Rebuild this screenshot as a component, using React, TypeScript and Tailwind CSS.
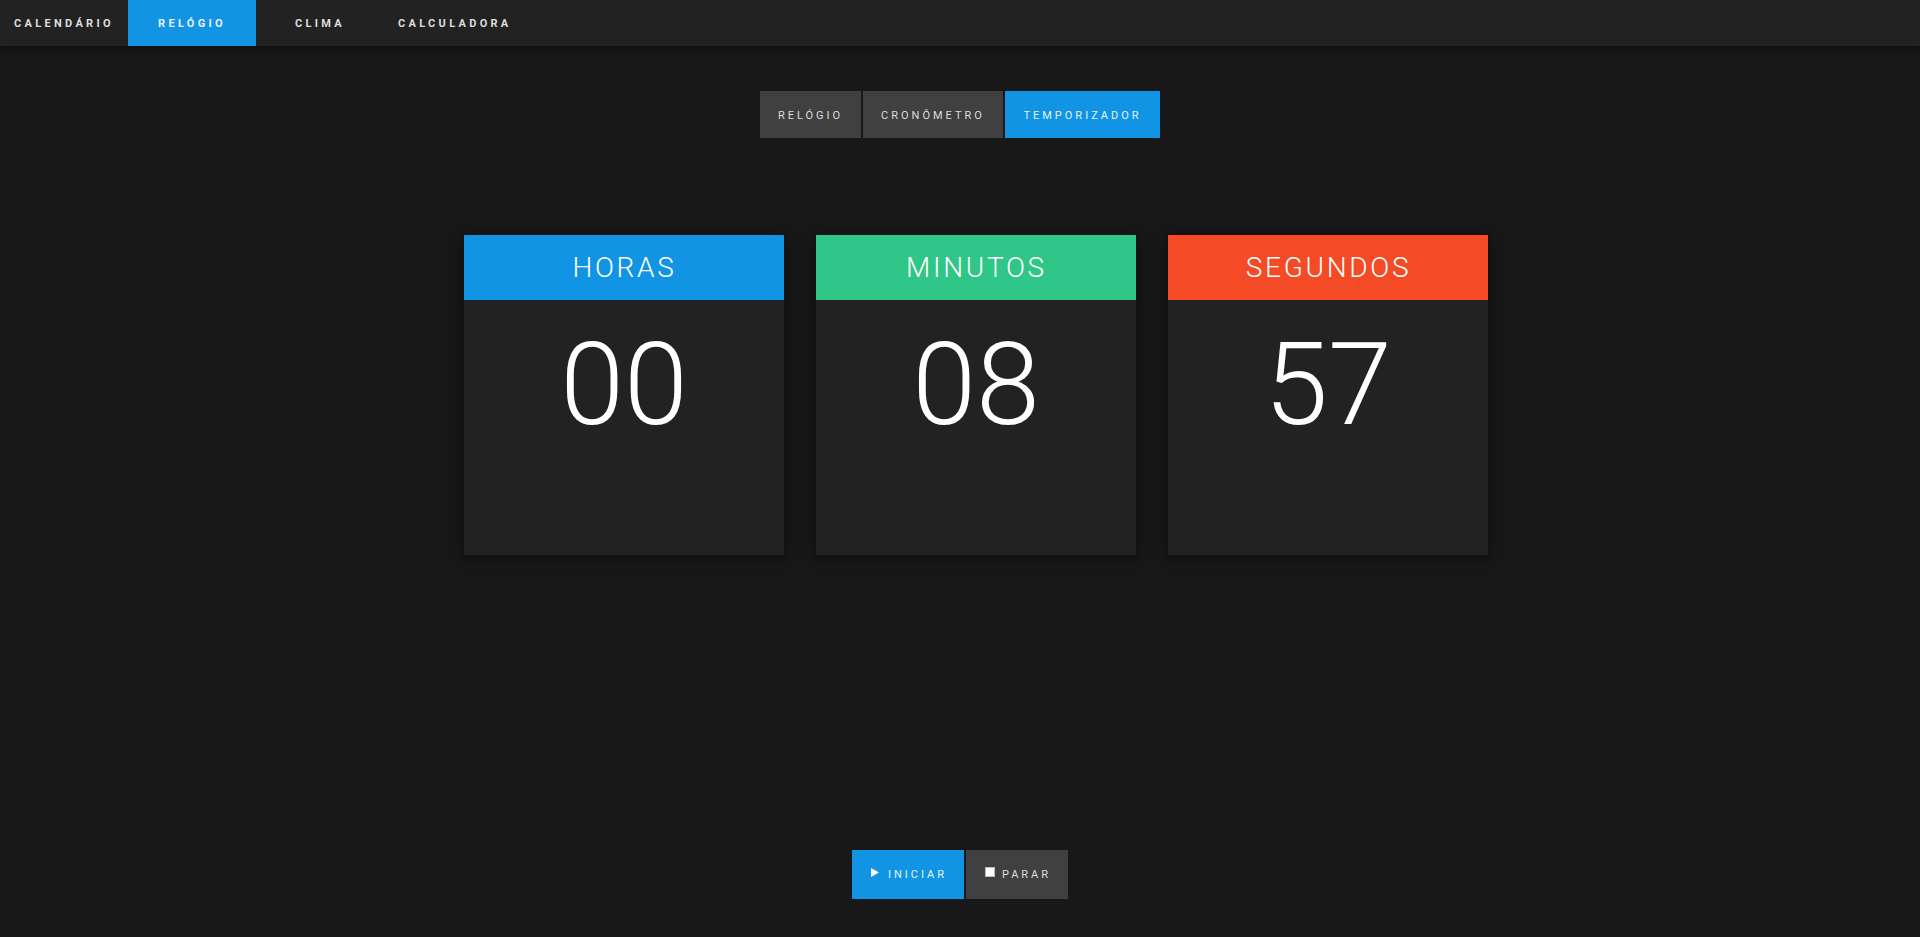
import React from "react";

const navItems = ["CALENDÁRIO", "RELÓGIO", "CLIMA", "CALCULADORA"];
const tabs = ["RELÓGIO", "CRONÔMETRO", "TEMPORIZADOR"];

function Card({ title, value, color }: { title: string; value: string; color: string }) {
  return (
    <div className="w-[320px] h-[320px] bg-[#222222] shadow-[0_2px_12px_rgba(0,0,0,0.55)] flex flex-col">
      <div className={`h-[65px] flex items-center justify-center ${color}`}>
        <span className="text-[28px] font-light tracking-[2.7px] text-white leading-none pl-[1px]">{title}</span>
      </div>
      <div className="flex justify-center pt-[27px]">
        <span className="text-[115px] font-light text-white leading-[115px]">{value}</span>
      </div>
    </div>
  );
}

export default function App() {
  return (
    <div className="min-h-[937px] bg-[#181818] flex flex-col" style={{ fontFamily: "Roboto, 'Liberation Sans', sans-serif" }}>
      <nav className="h-[46px] bg-[#222222] flex shadow-[0_2px_8px_rgba(0,0,0,0.5)] relative z-10">
        {navItems.map((n, i) => (
          <div
            key={n}
            className={`min-w-[128px] px-[14px] flex items-center justify-center text-[11px] leading-none font-bold tracking-[3.3px] ${
              i === 1 ? "bg-[#1194e3] text-[#e6f2fb]" : "text-[#dddddd]"
            }`}
          >
            <span>{n}</span>
          </div>
        ))}
      </nav>

      <div className="flex justify-center gap-[2px] mt-[45px]">
        {tabs.map((t, i) => (
          <div
            key={t}
            className={`h-[47px] px-[14px] pt-[2px] flex items-center justify-center text-[11px] leading-none tracking-[3px] ${
              i === 2 ? "bg-[#1194e3] text-[#e8f2fb] w-[155px]" : "bg-[#404040] text-[#dddddd]"
            } ${i === 0 ? "w-[101px]" : ""} ${i === 1 ? "w-[140px]" : ""}`}
          >
            <span>{t}</span>
          </div>
        ))}
      </div>

      <div className="flex justify-center gap-[32px] mt-[97px] pl-[32px]">
        <Card title="HORAS" value="00" color="bg-[#1194e3]" />
        <Card title="MINUTOS" value="08" color="bg-[#2fc687]" />
        <Card title="SEGUNDOS" value="57" color="bg-[#f44a25]" />
      </div>

      <div className="flex justify-center gap-[2px] mt-[295px]">
        <div className="w-[112px] h-[49px] bg-[#1194e3] flex items-center justify-center text-[11px] leading-none tracking-[3px] text-[#e8f2fb] pl-[2px]">
          <svg width="8" height="9" viewBox="0 0 8 9" className="mb-[5px] mr-[9px]">
            <polygon points="0,0 8,4.5 0,9" fill="white" />
          </svg>
          <span>INICIAR</span>
        </div>
        <div className="w-[102px] h-[49px] bg-[#404040] flex items-center justify-center text-[11px] leading-none tracking-[3px] text-[#dddddd] pl-[2px]">
          <div className="w-[10px] h-[10px] bg-white border border-[#bbbbbb] mb-[5px] mr-[7px]" />
          <span>PARAR</span>
        </div>
      </div>
    </div>
  );
}
